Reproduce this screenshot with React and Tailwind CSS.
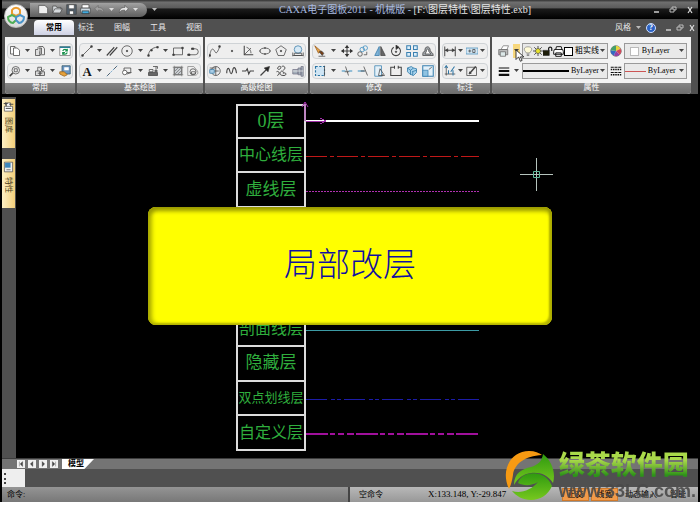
import React, { useState } from 'react';

const ICONS = {
  copy: <><path d="M2 2h6v10H2z" fill="#fafafa" /><path d="M6 4h5l3 3v7H6z" fill="#fff" /></>,
  copies: <><path d="M2 6h6v8H2z" fill="#ddd" /><path d="M4 4h6v8M6 2h6l2 3v8H8V4" fill="#eee" /></>,
  refresh: <><path d="M1 2h14v12H1z" fill="#fff" stroke="#777" /><path d="M1 3h14" stroke="#2a7f96" strokeWidth="2" /><path d="M5 8c1-3 5-3 6 0M11 10c-1 3-5 3-6 0M11 5v3H8M5 13v-3h3" stroke="#16904a" strokeWidth="1.6" /></>,
  zoom: <><circle cx="9" cy="7" r="5" /><path d="M7 5h4v4H7zM5 10l-4 4" /><path d="M1 15l4-4" strokeWidth="2" /></>,
  paste: <><path d="M2 8h6v6H2zM8 9h6v5H8z" fill="#ddd" /><path d="M5 8V3h5v5M8 5l3 3 3-2M5 11h6" /></>,
  props: <><path d="M4 1h11v11H4z" fill="#6c97c4" stroke="#356" /><path d="M7 3h6v4H7z" fill="#fff" stroke="none" /><path d="M1 9h6l4 4-4 2-6-3z" fill="#e5a13c" stroke="#94601c" /></>,
  line: <><path d="M2 14L14 2" /><path d="M1 13h2v2H1zM13 1h2v2h-2z" fill="#333" /></>,
  parallel: <path d="M1 14L11 3M5 14L15 3" strokeWidth="1.5" />,
  circle: <><circle cx="8" cy="8" r="7" /><circle cx="8" cy="8" r="1" fill="#333" /></>,
  arc: <><path d="M2 14C2 8 7 3 14 3" /><path d="M1 13h2v2H1zM13 2h2v2h-2zM5 6h2v2H5z" fill="#333" /></>,
  rect: <><path d="M2 4h12v9H2z" fill="#eee" /><path d="M1 12h2v2H1zM13 3h2v2h-2z" fill="#333" /></>,
  pline: <><path d="M2 13h9a4 4 0 0 0 0-8H8" /><path d="M1 12h3v2H1zM6 4h3v2H6z" fill="#333" /></>,
  text: <text x="8" y="14" textAnchor="middle" fontFamily="Liberation Serif, serif" fontWeight="bold" fontSize="17" fill="#111" stroke="none">A</text>,
  center: <><path d="M1 15L6 10M7 9l1-1M9 7l6-6" stroke="#3b82b8" /><path d="M2 14l3-3M11 5l3-3" /></>,
  shape: <><path d="M4 4h9v6H4z" fill="#eee" /><circle cx="5" cy="10" r="3" fill="#fff" /><path d="M8 12l6-2" /></>,
  block: <><path d="M2 10h12v4H2z" fill="#666" /><path d="M3 6h5v3H3zM8 2h6v3M12 2v7" /><path d="M10 8h4" strokeWidth="2" /></>,
  hatch: <><path d="M3 3h10v10H3z" fill="#c9cdd1" /><path d="M1 3h14M1 13h14M3 1v14M13 1v14M4 8l5-5M4 12l8-8M8 12l5-5" stroke="#777" /></>,
  contour: <><path d="M1 2h8l5 6c2 5-3 6-5 6H1z" fill="#eee" stroke="#888" /><circle cx="8" cy="9" r="4" /><path d="M6 9h5v3H6z" fill="#fff" /></>,
  spline: <><path d="M1 14C3 2 6 5 8 9s4-1 6-6" /><path d="M0 13h2v2H0zM13 1h2v2h-2z" fill="#333" /></>,
  point: <circle cx="8" cy="8" r="1" fill="#333" />,
  axis: <><path d="M3 1v12h12" strokeWidth="1.4" /><path d="M3 13L12 4M6 3c4 1 6 5 6 8" /></>,
  ellipse: <><ellipse cx="8" cy="8" rx="7" ry="4" /><path d="M8 3v2M8 11v2M1 8h1M14 8h1" strokeWidth="2" /></>,
  pentagon: <><path d="M8 1l7 5-3 8H4L1 6z" /><circle cx="8" cy="8" r="1" fill="#333" /></>,
  hole: <><circle cx="8" cy="6" r="5" fill="#d7e9f5" stroke="#3b7ca8" /><path d="M1 10v5M15 10v5M3 11h10v3H3zM1 14h14" /></>,
  detail: <><circle cx="9" cy="8" r="6" /><path d="M1 4h8M1 8h12M9 2v12" /><path d="M1 6h6v5H1z" fill="#a9cde6" stroke="#3b7ca8" /></>,
  wave: <path d="M1 11C1 3 4 3 5 8s3 5 4-1 4-4 5 4" strokeWidth="1.5" />,
  break: <path d="M0 8h5l2-3 2 7 2-4h5" strokeWidth="1.5" />,
  arrow: <><path d="M2 14l8-8" strokeWidth="1.6" /><path d="M14 2l-2 7-5-5z" fill="#222" /></>,
  cloud: <path d="M4 3c3-3 5 0 3 2s-5 0-3-2M9 2c4-2 6 3 2 5M2 9c4-2 5 4 1 5M7 10c2-4 5-1 4 1 4-2 5 3 1 3s-6-1-5-4" strokeWidth="1.3" />,
  gear: <><path d="M1 6h7v6H1zM8 4h4v9H8zM12 2h3v13h-3z" fill="#a5b0bb" stroke="#778" /><path d="M1 8h14" stroke="#eee" /></>,
  erase: <><path d="M1 1l8 7-3 3z" fill="#e8a64b" stroke="#9a5a18" /><path d="M7 9l3-1 3 3-2 3z" fill="#7a3e12" /><path d="M6 15h9" /></>,
  move: <><path d="M8 1v14M1 8h14" strokeWidth="1.5" /><path d="M8 0l3 4H5zM8 16l3-4H5zM0 8l4-3v6zM16 8l-4-3v6z" fill="#333" stroke="none" /></>,
  copyObj: <><circle cx="11" cy="4" r="3" stroke="#3a8ec0" /><circle cx="7" cy="6" r="3" stroke="#3a8ec0" /><circle cx="4" cy="12" r="3" /><path d="M9 13h4V9" /></>,
  mirror: <><path d="M7 2v12H1z" fill="#7fb2d6" stroke="#3478a8" /><path d="M9 2v12h6z" fill="#666" /></>,
  rotate: <><path d="M5 3a6 6 0 1 0 6 0" strokeWidth="1.4" /><path d="M8 0l4 3-4 3z" fill="#222" /><circle cx="8" cy="9" r="1" fill="#333" /></>,
  array: <path d="M1 1h5v5H1zM10 1h5v5h-5zM1 10h5v5H1zM10 10h5v5h-5z" fill="#dceefa" stroke="#3a80b0" strokeWidth="1.4" />,
  offset: <><path d="M1 14h14c0-4-3-4-4-6 0-8-8-7-7 0-3 1-3 3-3 6z" fill="#a3a8ad" /><path d="M4 12h8c-1-2-3-2-3-4 0-4-3-3-3 0z" fill="#fff" /></>,
  clip: <><path d="M2 2h12v12H2z" fill="#cfe5f4" stroke="#2a75a5" strokeDasharray="3 2" strokeWidth="1.5" /><path d="M14 1v14" /></>,
  trim: <><path d="M1 8h5M10 8h5" stroke="#3a8ec0" strokeWidth="1.4" /><path d="M6 2l4 12M5 9h6" /></>,
  extend: <><path d="M1 8h9" stroke="#3a8ec0" strokeWidth="1.4" /><path d="M9 2l5 12M5 8h6" /></>,
  stretch: <><path d="M1 1h9v14H1z" fill="#e4f0f8" stroke="#3a80b0" /><path d="M8 5l6 9H6zM11 12v3" /></>,
  open: <path d="M6 3H1v11h14V3h-4M6 1v4M11 1v4" strokeWidth="1.4" />,
  solid: <path d="M2 4l5-2 3 2 4 1v5l-4 4-5-2-3-3zM2 4l4 3v6M6 7l4-3M8 9l6-2M9 9v5" fill="#a7d2ec" stroke="#2a75a5" />,
  scale: <><path d="M1 1h14v14H1z" fill="#e3f1fa" stroke="#3a80b0" strokeWidth="1.4" /><path d="M1 7h7v8H1z" fill="#8fc3e2" stroke="#3a80b0" /><path d="M9 6l4-3" /></>,
  dim: <><path d="M1 2v13M15 2v13M1 7h14" strokeWidth="1.3" /><path d="M2 7l3-2v4zM14 7l-3-2v4z" fill="#333" /></>,
  tol: <><path d="M0 4h16v8H0z" fill="#d4e7f4" stroke="#4a8fb9" /><path d="M3 8h4M5 6v4M9 6h3v4H9z" /></>,
  coord: <><path d="M3 2v12M1 12h14" /><path d="M6 12V7M9 9l5-7M12 7v7M1 4l2-3 2 3" stroke="#2e76a5" strokeWidth="1.4" /></>,
  edit: <><path d="M1 3h13v11H1z" fill="#eee" /><path d="M5 11l8-9" strokeWidth="2" /><path d="M4 12l1-3 2 2z" fill="#222" /></>,
  layers: <><path d="M4 6l3-5h7l-2 5z" fill="#fff" stroke="#777" /><path d="M1 6h12v7H1z" fill="#bbb" stroke="#666" /><path d="M3 9h7v6H3z" fill="#dce8e8" stroke="#666" /></>,
  wheel: <><circle cx="8" cy="8" r="7" fill="#eee" stroke="#666" /><path d="M8 8V1a7 7 0 0 1 6 4z" fill="#e8d43b" stroke="none" /><path d="M8 8l6-3a7 7 0 0 1-1 8z" fill="#d3485a" stroke="none" /><path d="M8 8l5 5a7 7 0 0 1-8 1z" fill="#9240a5" stroke="none" /><path d="M8 8l-3 6a7 7 0 0 1-4-7z" fill="#3369c2" stroke="none" /><path d="M8 8L1 7a7 7 0 0 1 7-6z" fill="#48a06a" stroke="none" /></>,
  width: <><path d="M1 4h14" stroke="#111" strokeWidth="1.5" /><path d="M1 8h14" stroke="#111" strokeWidth="2.5" /><path d="M1 13h14" stroke="#111" strokeWidth="3" /></>,
  ltype: <><path d="M1 3h14M1 10h14" stroke="#111" strokeWidth="1.5" strokeDasharray="4 1" /><path d="M1 6h14M1 13h14" stroke="#111" strokeWidth="2" strokeDasharray="2 1" /></>,
  bulb: <><path d="M5 11c0-2-3-3-3-6 0-5 12-5 12 0 0 3-3 4-3 6z" fill="#fffbd8" stroke="#777" /><path d="M6 13h4M6 15h4" /></>,
  sun: <><path d="M8 0v16M0 8h16M2 2l12 12M14 2L2 14" stroke="#333" strokeWidth="1.3" /><circle cx="8" cy="8" r="4" fill="#e9e42d" /></>,
  lock: <><path d="M0 7h10v8H0z" fill="#1d1d08" stroke="#222" /><path d="M9 8V4c0-3 5-3 5 0v4" stroke="#222" strokeWidth="2" /></>,
  printer: <path d="M4 5l1-4h7l1 4M2 5h12l1 3v4H1V8zM4 10h8v5H4z" fill="#fff" stroke="#111" strokeWidth="1.4" />,
  newFile: <path d="M1 2h9l4 4v8H1z" fill="#eee" />,
  folder: <path d="M1 13V3h5l1 2h6v3M1 13l3-6h11l-3 6z" fill="#d5d9dc" />,
  save: <><path d="M1 1h14v14H1z" fill="#53606c" /><path d="M4 1h8v6H4zM5 10h6v5H5z" fill="#fff" /></>,
  print: <><path d="M3 1h10v5H3z" fill="#fff" /><path d="M1 6h14v7H1z" fill="#ccd8e0" /><path d="M3 10h10v4H3z" fill="#41a9dc" stroke="#333" /></>,
  undo: <path d="M1 7l5-5v3c6 0 8 3 8 8-2-4-4-4-8-4v3z" fill="#a0a0a0" stroke="#6c6c6c" />,
  redo: <path d="M15 7l-5-5v3C4 5 2 8 2 13c2-4 4-4 8-4v3z" fill="#e5e5e5" stroke="#555" />,
  library: <><path d="M2 7h12v7H2zM5 7V2h6v5" fill="#fff" /><path d="M1 3h6M4 1v5M9 4h6M4 10h8" strokeWidth="1.4" /></>,
  sheet: <><path d="M2 1h12v14H2z" fill="#eee" /><path d="M3 2h8v7H3z" fill="#3c86bb" stroke="none" /><path d="M5 12h6" /></>,
};

// '|' marks a drop-down caret after the previous tool
const GROUPS = [
  { title: '常用', width: 'w-[70px]', rows: [['copy', '|', 'copies', '|', 'refresh'], ['zoom', '|', 'paste', '|', 'props']] },
  { title: '基本绘图', width: 'w-[126px]', rows: [['line', '|', 'parallel', 'circle', '|', 'arc', '|', 'rect', 'pline'], ['text', '|', 'center', 'shape', '|', 'block', '|', 'hatch', 'contour']] },
  { title: '高级绘图', width: 'w-[103px]', rows: [['spline', 'point', 'axis', 'ellipse', 'pentagon', 'hole'], ['detail', 'wave', 'break', 'arrow', 'cloud', 'gear']] },
  { title: '修改', width: 'w-[128px]', rows: [['erase', '|', 'move', 'copyObj', 'mirror', 'rotate', 'array', 'offset'], ['clip', '|', 'trim', 'extend', 'stretch', 'open', 'solid', 'scale']] },
  { title: '标注', width: 'w-[50px]', rows: [['dim', '|', 'tol', '|'], ['coord', '|', 'edit', '|']] },
];

const TABS = ['常用', '标注', '图幅', '工具', '视图'];

const LAYERS = [
  { name: '0层', size: 'text-[18px]', color: '#ffffff', width: 2 },
  { name: '中心线层', size: 'text-[16px]', color: '#c01818', width: 1, dash: '21 3 4 3' },
  { name: '虚线层', size: 'text-[17px]', color: '#b030b0', width: 1, dash: '2 1' },
  {},
  {},
  {},
  { name: '剖面线层', size: 'text-[16px]', color: '#3c9ba5', width: 1 },
  { name: '隐藏层', size: 'text-[17px]' },
  { name: '双点划线层', size: 'text-[13px]', color: '#1c1ca8', width: 1, dash: '21 4 4 2 4 3' },
  { name: '自定义层', size: 'text-[16px]', color: '#a0109c', width: 2, dash: '22 2 5 3 6 3 7 2' },
];

function Icon({ name, className = 'h-3 w-3', stroke = '#444' }) {
  return (
    <svg viewBox="0 0 16 16" className={`shrink-0 ${className}`} fill="none" stroke={stroke} strokeWidth="1" aria-hidden="true">
      {ICONS[name]}
    </svg>
  );
}

function Caret({ color = '#444' }) {
  return (
    <svg viewBox="0 0 7 4" className="h-1 w-[7px] shrink-0" aria-hidden="true">
      <path d="M1 0h5L3.5 3z" fill={color} />
    </svg>
  );
}

function Group({ title, width, children }) {
  return (
    <section className={`flex flex-col overflow-hidden rounded-b-sm bg-[#f3f3f3] ${width}`}>
      <div className="flex flex-1 flex-col gap-1 px-[2px] pt-[6px] pb-1">{children}</div>
      <h2 className="h-[11px] bg-linear-to-b from-[#858585] to-[#6c6c6c] text-center text-[8px] leading-[10px] text-white">{title}</h2>
    </section>
  );
}

function ToolRow({ tools }) {
  return (
    <div className="flex h-4 items-center justify-between rounded-sm border border-[#cfd3d6] bg-[#eeeeee] px-px">
      {tools.map((t, i) => (
        <button key={i} type="button" aria-label={t === '|' ? 'more' : t} className="flex shrink-0 items-center">
          {t === '|' ? <Caret /> : <Icon name={t} />}
        </button>
      ))}
    </div>
  );
}

function Combo({ label, value, width, children }) {
  return (
    <div className={`flex h-4 min-w-0 items-center border border-[#9a9a9a] bg-[#e9e9e9] pr-px ${width}`}>
      {children}
      <select aria-label={label} className="min-w-0 flex-1 appearance-none bg-transparent text-[8px] leading-[12px] text-black outline-none">
        <option>{value}</option>
      </select>
      <Caret />
    </div>
  );
}

function WindowButtons({ className }) {
  return (
    <div className={`flex items-center ${className}`}>
      <button type="button" aria-label="minimize">
        <svg viewBox="0 0 8 8" className="h-2 w-2"><path d="M2 6h5" stroke="#ccc" strokeWidth="1.5" /></svg>
      </button>
      <button type="button" aria-label="restore">
        <svg viewBox="0 0 8 8" className="h-2 w-2" fill="none" stroke="#bbb"><path d="M1 3h4v3H1zM3 3V1h4v3H5" /></svg>
      </button>
      <button type="button" aria-label="close">
        <svg viewBox="0 0 8 8" className="h-2 w-2"><path d="M2 1l4 6M6 1L2 7" stroke="#ddd" strokeWidth="1.2" /></svg>
      </button>
    </div>
  );
}

function TitleBar() {
  return (
    <header className="flex h-[19px] items-center bg-[linear-gradient(#333_0%,#6e6e6e_12%,#5c5c5c_40%,#1a1a1a_48%,#000_100%)] pl-[28px]">
      <div className="flex h-[14px] w-[117px] shrink-0 items-center justify-between rounded-r-full bg-linear-to-b from-[#a2a2a2] to-[#5e5e5e] px-2">
        {['newFile', 'folder', 'save', 'print', 'undo'].map((n) => (
          <button key={n} type="button" aria-label={n}><Icon name={n} className="h-[11px] w-[11px]" /></button>
        ))}
        <Caret color="#ddd" />
        <button type="button" aria-label="redo"><Icon name="redo" className="h-[11px] w-[11px]" /></button>
        <Caret color="#ddd" />
      </div>
      <span className="ml-1"><Caret color="#bbb" /></span>
      <h1 className="flex-1 text-center text-[10px] leading-[14px] whitespace-pre">
        <span className="text-[#a9bbe0]">CAXA电子图板2011 - 机械版 - </span>
        <span className="text-[#e6e6e6]">[F:\图层特性\图层特性.exb]</span>
      </h1>
      <WindowButtons className="gap-[9px] pr-1" />
    </header>
  );
}

function TabBar() {
  const [active, setActive] = useState(TABS[0]);
  return (
    <nav className="flex h-[18px] items-end bg-[#505050] pb-[2px] pl-[32px]">
      {TABS.map((t) => (
        <button
          key={t}
          type="button"
          onClick={() => setActive(t)}
          className={`h-[15px] text-[8px] leading-[14px] ${t === active
            ? 'w-[40px] rounded-t-sm bg-linear-to-b from-white to-[#cfd2e4] font-bold text-black'
            : 'mr-[12px] w-[24px] text-[#e8e8e8]'}`}
        >
          {t}
        </button>
      ))}
      <div className="ml-auto flex h-[15px] items-center gap-1 pr-[2px]">
        <button type="button" className="flex items-center gap-1 text-[8px] text-[#e8e8e8]">风格 <Caret color="#bbb" /></button>
        <button type="button" aria-label="help" className="h-[10px] w-[10px] rounded-full border border-[#cfe0ff] bg-[#2b62c4] text-[8px] leading-[8px] font-bold text-white">?</button>
        <WindowButtons className="gap-1 pl-1" />
      </div>
    </nav>
  );
}

function PropertyGroup() {
  return (
    <Group title="属性" width="min-w-0 flex-1">
      <div className="flex items-center gap-[2px] px-[2px]">
        <div className="relative flex w-[24px] shrink-0 items-center justify-between pl-[2px]">
          <Icon name="layers" />
          <span className="flex h-[14px] items-center bg-[#f7d77c]"><Caret /></span>
          <svg viewBox="0 0 10 16" className="absolute top-[5px] left-[19px] z-10 h-[14px] w-[9px]" aria-hidden="true">
            <path d="M1 1v11l3-3 2 5 2-1-2-4h4z" fill="#fff" stroke="#222" />
          </svg>
        </div>
        <Combo label="图层" value="粗实线" width="flex-[11]">
          <Icon name="bulb" className="h-[10px] w-[10px]" />
          <Icon name="sun" className="h-[10px] w-[10px]" />
          <Icon name="lock" className="h-[10px] w-[10px]" />
          <Icon name="printer" className="h-[11px] w-[11px]" />
          <span className="mr-[2px] h-[9px] w-[9px] shrink-0 border border-black bg-white" />
        </Combo>
        <button type="button" aria-label="颜色"><Icon name="wheel" /></button>
        <Combo label="颜色" value="ByLayer" width="flex-[8]">
          <span className="mr-[3px] ml-[5px] h-[9px] w-[9px] shrink-0 border border-[#bbb] bg-white" />
        </Combo>
      </div>
      <div className="flex items-center gap-[2px] px-[2px]">
        <div className="flex w-[24px] shrink-0 items-center justify-between pl-[2px]">
          <Icon name="width" />
          <Caret />
        </div>
        <Combo label="线宽" value="ByLayer" width="flex-[11]">
          <span className="mr-[2px] h-[2px] w-[46px] shrink-0 bg-black" />
        </Combo>
        <button type="button" aria-label="线型"><Icon name="ltype" /></button>
        <Combo label="线型" value="ByLayer" width="flex-[8]">
          <span className="mr-[2px] h-px w-[21px] shrink-0 bg-[#cc5555]" />
        </Combo>
      </div>
    </Group>
  );
}

function Drawing() {
  return (
    <div className="relative grid h-[347px] grid-rows-10">
      {LAYERS.map((l, i) => (
        <div key={i} className="flex items-center">
          <div className={`flex h-full w-[70px] shrink-0 items-center justify-center border-x-2 border-b-2 border-[#dcdcdc] whitespace-nowrap text-[#2fae3d] ${i === 0 ? 'border-t-2' : ''} ${l.size || ''}`}>
            {l.name}
          </div>
          {l.color && (
            <svg className="h-2 w-[173px] shrink-0" viewBox="0 0 173 8" shapeRendering="crispEdges" aria-hidden="true">
              <path d={l.width === 2 ? 'M0 4h173' : 'M0 4.5h173'} stroke={l.color} strokeWidth={l.width} strokeDasharray={l.dash} />
              {i === 0 && <path d="M0 4h20M14 1l6 3-6 3" fill="none" stroke="#a030a8" />}
            </svg>
          )}
        </div>
      ))}
      {/* UCS y axis */}
      <svg className="absolute -top-[3px] left-[65px] h-5 w-2" viewBox="0 0 8 20" fill="none" stroke="#a030a8" aria-hidden="true">
        <path d="M4 20V1M1 6l3-5 3 5" />
      </svg>
    </div>
  );
}

function SideTab({ icon, children }) {
  return (
    <button type="button" className="flex h-[49px] w-[13px] flex-col items-center gap-1 bg-linear-to-r from-[#fdf0c4] to-[#f3cf79] pt-[2px] text-[8px] text-[#4a3b18]">
      <Icon name={icon} className="h-[12px] w-[11px]" />
      <span className="leading-[11px] [text-orientation:sideways] [writing-mode:vertical-rl]">{children}</span>
    </button>
  );
}

function Watermark() {
  return (
    <div className="absolute right-[2px] bottom-0 flex items-center gap-1">
      <svg viewBox="0 0 50 52" className="h-[52px] w-[50px]" aria-hidden="true">
        <defs>
          <linearGradient id="leaf" x1="0" y1="0" x2="0" y2="1">
            <stop offset="0" stopColor="#2f9a10" />
            <stop offset="1" stopColor="#77c81e" />
          </linearGradient>
        </defs>
        <path d="M4 39C-5 20 6 1 24 1c6 0 10 2 13 4C20 6 9 14 8 25c-1 6-2 10-4 14z" fill="#f79a12" />
        <path d="M38 4c9 7 13 19 10 29-5-8-13-11-22-10-8 1-13 5-17 12 0-12 8-16 17-18 7-2 11-6 12-13z" fill="url(#leaf)" />
        <path d="M13 33c3-9 13-11 21-9 7 2 11 7 13 12-4 9-12 14-21 14-8 0-15-4-19-9 9 3 19-1 26-9-7 4-14 4-20 1z" fill="url(#leaf)" />
      </svg>
      <div className="flex flex-col">
        <span className="bg-linear-to-b from-[#a9d94a] from-30% to-[#2c9418] to-80% bg-clip-text text-[26px] leading-[30px] font-black text-transparent">绿茶软件园</span>
        <span className="font-['Liberation_Sans',sans-serif] text-[18px] leading-[20px] font-bold text-[#4a4a4a] opacity-90">www.33LC.com.</span>
      </div>
    </div>
  );
}

export default function App() {
  return (
    <div className="min-h-screen bg-white font-['Liberation_Serif','Noto_Sans_CJK_SC',sans-serif]">
      <div className="relative border-x-2 border-black bg-[#505050]">
        <TitleBar />
        <TabBar />

        <button type="button" aria-label="menu" className="absolute top-1 left-[2px] h-6 w-6 rounded-full border border-[#bbb] bg-linear-to-b from-white to-[#d8d8d8]">
          <svg viewBox="0 0 22 22" className="h-[22px] w-[22px]" fill="none" strokeWidth="2">
            <path d="M7 9V5c2-3 6-3 8 0v4l-4 2z" stroke="#eb9b2d" />
            <path d="M7 10l-4 2c0 3 2 6 5 6l3-3v-3z" stroke="#4fae56" />
            <path d="M15 10l4 2c0 3-2 6-5 6l-3-3v-3z" stroke="#4a93c9" />
          </svg>
        </button>

        <div className="flex gap-[2px] pr-[7px] pl-[3px]">
          {GROUPS.map((g) => (
            <Group key={g.title} title={g.title} width={g.width}>
              {g.rows.map((r, i) => <ToolRow key={i} tools={r} />)}
            </Group>
          ))}
          <PropertyGroup />
        </div>

        <main className="relative flex border-t-3 border-black">
          <aside className="flex w-[14px] shrink-0 flex-col gap-[11px] pt-[2px]">
            <SideTab icon="library">图库</SideTab>
            <SideTab icon="sheet">特性</SideTab>
          </aside>
          <div className="flex-1 bg-black py-[7px] pl-[220px]">
            <Drawing />
          </div>
          <svg className="absolute top-[61px] left-[518px] h-[33px] w-[33px]" viewBox="0 0 33 33" fill="none" aria-hidden="true">
            <path d="M0 16.5h33M16.5 0v33" stroke="#b5c4bd" />
            <path d="M13.5 13.5h6v6h-6z" stroke="#5fb898" />
          </svg>
          <div className="absolute top-[110px] left-[146px] flex h-[118px] w-[404px] items-center justify-center rounded-lg bg-[#ffff00] text-[33px] font-light text-[#1010a0] shadow-[inset_0_4px_4px_#989800,inset_4px_0_4px_#b4b400,inset_-3px_-2px_2px_#b8b800]">
            局部改层
          </div>
        </main>

        <div className="flex h-[11px] items-center border-t border-[#3c3c3c] bg-[#747474] pl-[15px]">
          <div className="flex gap-[3px]">
            {['M2 1v6M6 1L3 4l3 3z', 'M5 1L2 4l3 3z', 'M3 1l3 3-3 3z', 'M6 1v6M2 1l3 3-3 3z'].map((d) => (
              <button key={d} type="button" aria-label="sheet" className="h-2 w-2 bg-[#f2f2f2]">
                <svg viewBox="-1 -1 10 10" className="h-2 w-2"><path d={d} fill="#444" stroke="#444" strokeWidth="0.5" /></svg>
              </button>
            ))}
          </div>
          <button type="button" className="ml-1 h-[10px] w-[32px] bg-white pl-[6px] text-left text-[8px] leading-[10px] font-bold text-black [clip-path:polygon(0_0,100%_0,70%_100%,0_100%)]">模型</button>
        </div>
        <div className="h-[18px] bg-[#505050]">
          <div className="flex h-full w-[23px] items-center bg-[#eeeeee] pl-[2px]">
            <span className="h-[11px] border-l-2 border-dotted border-[#444]" />
          </div>
        </div>

        <footer className="flex h-[15px] items-center bg-linear-to-b from-[#949494] to-[#787878] text-[8px] text-black">
          <label htmlFor="cmd" className="pl-[5px]">命令:</label>
          <input id="cmd" className="h-full min-w-0 flex-1 bg-transparent outline-none" />
          <div className="flex h-full w-[350px] items-center border-l-2 border-[#444] bg-linear-to-b from-[#b8b8b8] to-[#989898] pl-[9px]">
            <span className="w-[69px]">空命令</span>
            <output className="w-[134px] text-[9px]">X:133.148, Y:-29.847</output>
            <button type="button" className="mr-[2px] w-[27px] border border-[#d0792a] bg-[#f09a4a] leading-[11px]">正交</button>
            <button type="button" className="w-[27px] border border-[#d0792a] bg-[#f09a4a] leading-[11px]">线宽</button>
            <button type="button" className="ml-[7px]">动态输入</button>
            <button type="button" className="ml-[13px]">智能</button>
          </div>
        </footer>
        <Watermark />
      </div>
    </div>
  );
}
